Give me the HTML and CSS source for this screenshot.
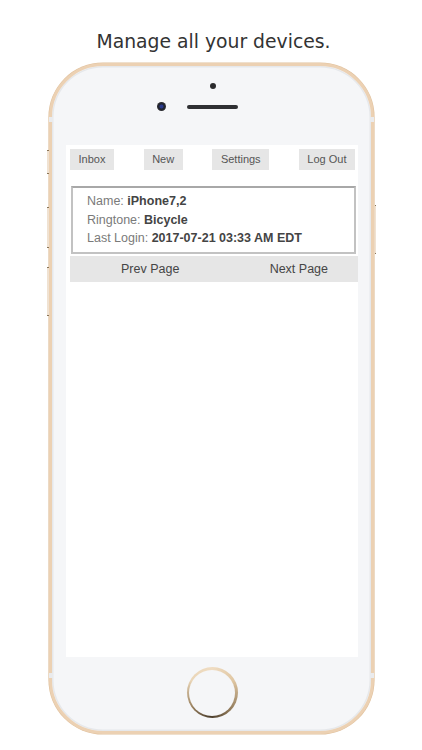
FILE: index.html
```html
<!DOCTYPE html>
<html lang="en">
<head>
<meta charset="utf-8">
<title>Manage all your devices</title>
<link rel="stylesheet" href="styles.css">
</head>
<body>
<div class="page">
  <h1 class="title">Manage all your devices.</h1>
  <div class="phone">
    <span class="side mute"></span>
    <span class="side vol-up"></span>
    <span class="side vol-down"></span>
    <span class="side power"></span>
    <span class="band band-tl"></span>
    <span class="band band-tr"></span>
    <span class="band band-bl"></span>
    <span class="band band-br"></span>
    <div class="top">
      <span class="sensor"></span>
      <div class="cam-row">
        <span class="lens"></span>
        <span class="speaker"></span>
        <span class="cam-spacer"></span>
      </div>
    </div>
    <div class="screen">
      <nav class="nav">
        <span class="btn">Inbox</span>
        <span class="btn">New</span>
        <span class="btn">Settings</span>
        <span class="btn">Log Out</span>
      </nav>
      <div class="card">
        <div class="line">Name: <b>iPhone7,2</b></div>
        <div class="line">Ringtone: <b>Bicycle</b></div>
        <div class="line">Last Login: <b>2017-07-21 03:33 AM EDT</b></div>
      </div>
      <div class="pager">
        <span>Prev Page</span>
        <span>Next Page</span>
      </div>
    </div>
    <div class="bottom">
      <div class="home"><div class="home-inner"></div></div>
    </div>
  </div>
</div>
</body>
</html>
```

FILE: styles.css
```css
html, body {
  margin: 0;
  padding: 0;
  background: #ffffff;
}

.page {
  width: 422px;
  height: 750px;
  overflow: hidden;
}

.title {
  margin: 0;
  padding-top: 31px;
  height: 32px;
  font-family: "DejaVu Sans", Verdana, sans-serif;
  font-weight: normal;
  font-size: 18.8px;
  line-height: 22px;
  color: #333333;
  text-align: center;
  padding-left: 5px;
}

.phone {
  position: relative;
  box-sizing: border-box;
  width: 325px;
  height: 671px;
  margin-left: 49px;
  border: 3px solid #ecd1b3;
  border-radius: 54px;
  background: #f5f6f8;
  box-shadow: 0 0 0 0.6px #e0c19e, inset 0 0 0 1.5px #e6e8eb;
  padding: 0 13px 0 14px;
  display: flex;
  flex-direction: column;
}

.side {
  position: absolute;
  width: 1.5px;
  background: #f0e2d2;
  border-top: 1px solid #8a7558;
  border-bottom: 1px solid #8a7558;
}
.mute { left: -5px; top: 84px; height: 22px; }
.vol-up { left: -5px; top: 141px; height: 39px; }
.vol-down { left: -5px; top: 201px; height: 47px; }
.power { right: -5px; top: 139px; height: 47px; }

.band {
  position: absolute;
  width: 4px;
  height: 5px;
  background: #eaebed;
}
.band-tl { left: -3px; top: 51px; }
.band-tr { right: -3px; top: 51px; }
.band-bl { left: -3px; top: 607px; }
.band-br { right: -3px; top: 607px; }

.top {
  height: 79px;
  flex: none;
  display: flex;
  flex-direction: column;
  align-items: center;
  padding-top: 17px;
  box-sizing: border-box;
}

.sensor {
  width: 6px;
  height: 6px;
  border-radius: 50%;
  background: #2b2b2d;
  margin-left: 1px;
}

.cam-row {
  display: flex;
  align-items: center;
  margin-top: 13px;
}

.lens {
  width: 9px;
  height: 9px;
  border-radius: 50%;
  background: radial-gradient(circle at 50% 50%, #2a3a8a 0 1.5px, #1e2230 2.5px, #2d2d30 4.5px);
}

.speaker {
  width: 51px;
  height: 4px;
  border-radius: 2px;
  background: #2f3033;
  margin-left: 21px;
}

.cam-spacer {
  width: 30px;
  height: 1px;
}

.screen {
  flex: none;
  height: 512px;
  background: #ffffff;
  font-family: "Liberation Sans", Arial, sans-serif;
}

.nav {
  display: flex;
  justify-content: space-between;
  padding: 4px 3px 0 4px;
}

.btn {
  display: block;
  height: 21px;
  line-height: 21px;
  padding: 0 8.5px;
  background: #e6e6e6;
  color: #555555;
  font-size: 11px;
}

.card {
  margin: 16px 2px 0 5px;
  border: 2px solid #c2c2c2;
  border-top-color: #a8a8a8;
  padding: 4px 14px 4px;
  color: #7a7a7a;
  font-size: 12.5px;
  line-height: 18.5px;
}

.card b {
  color: #444444;
  font-weight: bold;
}

.pager {
  margin: 2px 0 0 4px;
  height: 26px;
  background: #e6e6e6;
  display: flex;
  align-items: center;
  justify-content: space-between;
  padding: 0 30px 0 51px;
  color: #454545;
  font-size: 12.5px;
}

.bottom {
  flex: 1;
  display: flex;
  justify-content: center;
  padding-top: 10px;
}

.home {
  width: 51px;
  height: 51px;
  border-radius: 50%;
  box-sizing: border-box;
  padding: 2.5px;
  background: conic-gradient(from 0deg, #efdcc2, #e0c7a3 60deg, #8a7455 140deg, #4a3d2c 185deg, #9a8260 235deg, #ead6b8 300deg, #efdcc2);
}

.home-inner {
  width: 100%;
  height: 100%;
  border-radius: 50%;
  background: #f5f6f8;
}
```
